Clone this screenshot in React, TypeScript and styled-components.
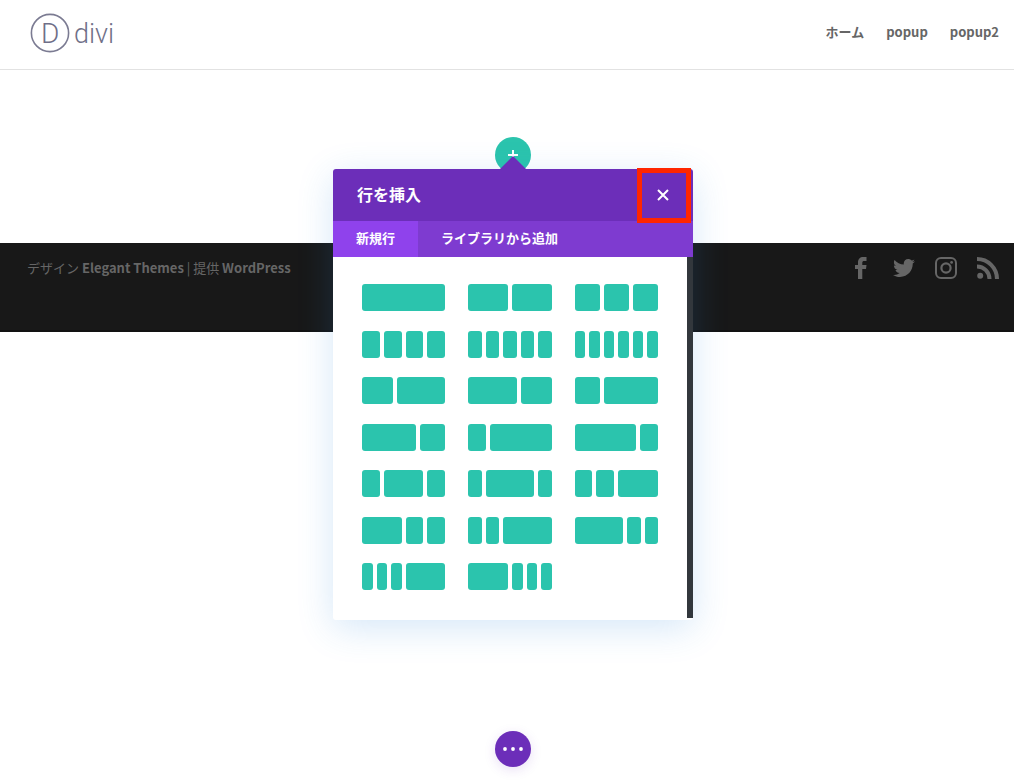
import React from 'react';
import styled, { createGlobalStyle } from 'styled-components';
import { FaTwitter } from 'react-icons/fa';

const GlobalStyle = createGlobalStyle`
  *, *::before, *::after { box-sizing: border-box; }
  body {
    margin: 0;
    background: #fff;
    color: #666;
    font-family: "Noto Sans CJK JP", "Noto Sans", sans-serif;
    font-size: 13px;
    line-height: 20px;
  }
  a { color: inherit; text-decoration: none; }
  button { border: 0; padding: 0; background: none; color: inherit; font: inherit; cursor: pointer; }
`;

const Page = styled.div`
  min-height: 100vh;
`;

const Header = styled.header`
  display: flex;
  align-items: flex-start;
  justify-content: space-between;
  height: 70px;
  padding: 13px 15px 0 30px;
  border-bottom: 1px solid #e2e2e2;
`;

const LogoLink = styled.a`
  display: block;
  height: 40px;
  svg { display: block; }
`;

const Nav = styled.nav`
  display: flex;
  gap: 22px;
  padding-top: 9px;
  font-weight: 700;
`;

const Section = styled.main`
  display: flex;
  justify-content: center;
  height: 173px;
  padding: 67px 0 0 12px;
`;

const Anchor = styled.div`
  position: relative;
  width: 36px;
  height: 36px;
`;

const RoundButton = styled.button<{ $color: string }>`
  display: grid;
  place-items: center;
  width: 36px;
  height: 36px;
  border-radius: 50%;
  background: ${p => p.$color};
  color: #fff;
`;

const Modal = styled.div`
  position: absolute;
  z-index: 2;
  top: 32px;
  left: 50%;
  width: 360px;
  margin-left: -180px;
  border-radius: 3px;
  background: #fff;
  box-shadow: 0 8px 36px rgba(43, 135, 218, 0.2);
  color: #fff;

  &::before {
    content: "";
    position: absolute;
    top: -13px;
    left: 167px;
    border: 13px solid transparent;
    border-top: 0;
    border-bottom-color: #6c2eb9;
  }
`;

const ModalHeader = styled.div`
  display: flex;
  align-items: center;
  justify-content: space-between;
  height: 52px;
  padding-left: 24px;
  border-radius: 3px 3px 0 0;
  background: #6c2eb9;
`;

const ModalTitle = styled.h2`
  margin: 0;
  padding-bottom: 2px;
  font-size: 16px;
  line-height: 24px;
  font-weight: 700;
`;

const CloseButton = styled.button`
  position: relative;
  display: grid;
  place-items: center;
  width: 60px;
  height: 52px;

  &::after {
    content: "";
    position: absolute;
    inset: -1px 2px -2px 4px;
    border: 5px solid #ff2600;
  }
`;

const Tabs = styled.div`
  display: flex;
  height: 36px;
  background: #7e3bd0;
`;

const Tab = styled.button<{ $active?: boolean }>`
  padding: 0 23px 2px;
  background: ${p => (p.$active ? '#8f42ec' : 'transparent')};
  font-weight: 700;
`;

const ModalBody = styled.div`
  display: flex;
  height: 363px;
`;

const LayoutGrid = styled.div`
  flex: 1;
  display: grid;
  grid-template-columns: repeat(3, minmax(0, 1fr));
  grid-auto-rows: 27px;
  align-content: space-between;
  column-gap: 23px;
  padding: 27px 29px 30px;
`;

const Scrollbar = styled.div`
  width: 6px;
  margin-bottom: 2px;
  background: #32373c;
`;

const LayoutButton = styled.button<{ $units: number }>`
  display: grid;
  grid-template-columns: repeat(${p => p.$units}, minmax(0, 1fr));
  gap: 4px;
`;

const Column = styled.span<{ $span: number }>`
  grid-column: span ${p => p.$span};
  height: 27px;
  border-radius: 3px;
  background: #2bc4ad;
`;

const Footer = styled.footer`
  display: flex;
  align-items: flex-start;
  justify-content: space-between;
  height: 89px;
  padding: 14px 15px 0 27px;
  border-bottom: 2px solid #121212;
  background: #181818;
`;

const Credits = styled.p`
  margin: 1px 0 0;
  a { font-weight: 700; }
`;

const SocialList = styled.ul`
  display: flex;
  gap: 20px;
  margin: 0;
  padding: 0;
  list-style: none;
  a, svg { display: block; width: 22px; height: 22px; }
`;

const BottomBar = styled.div`
  position: fixed;
  right: 0;
  bottom: 17px;
  left: 12px;
  display: flex;
  justify-content: center;
  ${RoundButton} { box-shadow: 0 3px 12px rgba(108, 46, 185, 0.15); }
`;

const layouts: number[][] = [
  [1], [1, 1], [1, 1, 1],
  [1, 1, 1, 1], [1, 1, 1, 1, 1], [1, 1, 1, 1, 1, 1],
  [2, 3], [3, 2], [1, 2],
  [2, 1], [1, 3], [3, 1],
  [1, 2, 1], [1, 3, 1], [1, 1, 2],
  [2, 1, 1], [1, 1, 3], [3, 1, 1],
  [1, 1, 1, 3], [3, 1, 1, 1],
];

const Logo = () => (
  <svg width="86" height="40" viewBox="0 0 86 40" fill="#6f6f88" fontFamily="Roboto, sans-serif" fontWeight="300">
    <circle cx="20" cy="20" r="18.6" fill="none" stroke="#7b7b92" strokeWidth="1.6" />
    <text x="11" y="30" fontSize="28">D</text>
    <text x="44" y="30" fontSize="27">divi</text>
  </svg>
);

const FacebookIcon = () => (
  <svg viewBox="0 0 22 22" fill="currentColor">
    <path d="M7 22V12H4V8h3V5.500C7 2 9 0 12.200 0H15.500V4H13.200C11.800 4 11.300 4.600 11.300 5.800V8h4.200L15 12h-3.700v10z" />
  </svg>
);

const InstagramIcon = () => (
  <svg viewBox="0 0 22 22" fill="none" stroke="currentColor">
    <rect x="1" y="1" width="20" height="20" rx="5" strokeWidth="2" />
    <circle cx="11" cy="11" r="4.600" strokeWidth="2.200" />
    <circle cx="16.600" cy="5.400" r="1.400" fill="currentColor" stroke="none" />
  </svg>
);

const RssIcon = () => (
  <svg viewBox="0 0 22 22" fill="none" stroke="currentColor" strokeWidth="4">
    <circle cx="3.200" cy="18.800" r="3" fill="currentColor" stroke="none" />
    <path d="M0 9.500A12.500 12.500 0 0 1 12.500 22" />
    <path d="M0 2A20 20 0 0 1 20 22" />
  </svg>
);

export default function App() {
  return (
    <Page>
      <GlobalStyle />
      <Header>
        <LogoLink href="#" aria-label="Divi"><Logo /></LogoLink>
        <Nav>
          <a href="#">ホーム</a>
          <a href="#">popup</a>
          <a href="#">popup2</a>
        </Nav>
      </Header>

      <Section>
        <Anchor>
          <RoundButton $color="#2bc4ad" aria-label="行を追加">
            <svg width="10" height="10" viewBox="0 0 10 10" stroke="currentColor" strokeWidth="2">
              <path d="M0 5h10M5 0v10" />
            </svg>
          </RoundButton>
          <Modal role="dialog" aria-label="行を挿入">
            <ModalHeader>
              <ModalTitle>行を挿入</ModalTitle>
              <CloseButton aria-label="閉じる">
                <svg width="12" height="12" viewBox="0 0 12 12" stroke="currentColor" strokeWidth="2">
                  <path d="M1 1l10 10M11 1L1 11" />
                </svg>
              </CloseButton>
            </ModalHeader>
            <Tabs role="tablist">
              <Tab role="tab" aria-selected="true" $active>新規行</Tab>
              <Tab role="tab" aria-selected="false">ライブラリから追加</Tab>
            </Tabs>
            <ModalBody>
              <LayoutGrid>
                {layouts.map((spans, i) => (
                  <LayoutButton key={i} $units={spans.reduce((a, b) => a + b, 0)} aria-label={spans.join(':')}>
                    {spans.map((span, j) => <Column key={j} $span={span} />)}
                  </LayoutButton>
                ))}
              </LayoutGrid>
              <Scrollbar />
            </ModalBody>
          </Modal>
        </Anchor>
      </Section>

      <Footer>
        <Credits>
          デザイン <a href="#">Elegant Themes</a> | 提供 <a href="#">WordPress</a>
        </Credits>
        <SocialList>
          <li><a href="#" aria-label="Facebook"><FacebookIcon /></a></li>
          <li><a href="#" aria-label="Twitter"><FaTwitter /></a></li>
          <li><a href="#" aria-label="Instagram"><InstagramIcon /></a></li>
          <li><a href="#" aria-label="RSS"><RssIcon /></a></li>
        </SocialList>
      </Footer>

      <BottomBar>
        <RoundButton $color="#6c2eb9" aria-label="設定">
          <svg width="20" height="4" viewBox="0 0 20 4" fill="currentColor">
            <circle cx="2" cy="2" r="1.900" />
            <circle cx="10" cy="2" r="1.900" />
            <circle cx="18" cy="2" r="1.900" />
          </svg>
        </RoundButton>
      </BottomBar>
    </Page>
  );
}
